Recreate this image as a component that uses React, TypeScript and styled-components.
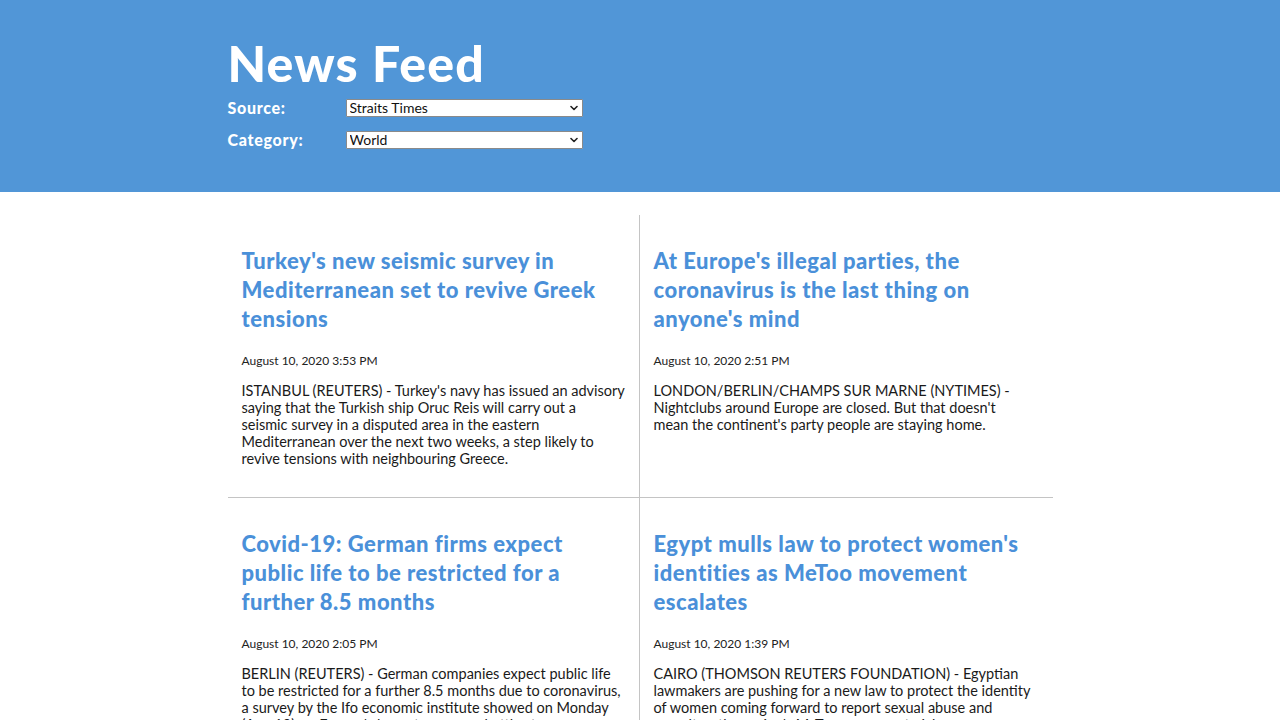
import React from "react";
import styled, { createGlobalStyle } from "styled-components";

const Global = createGlobalStyle`
  html, body { margin: 0; padding: 0; background: #ffffff; }
  body { font-family: Lato, "Noto Sans", sans-serif; color: #1f1f1f; }
`;

const Header = styled.header`
  background: #5196d7;
  height: 192px;
  box-sizing: border-box;
`;

const Container = styled.div`
  width: 825px;
  margin: 0 auto;
`;

const HeaderInner = styled(Container)`
  padding-top: 34px;
`;

const Title = styled.h1`
  margin: 0 0 6px;
  font-size: 50px;
  line-height: 58px;
  font-weight: 900;
  color: #ffffff;
  letter-spacing: 1.2px;
`;

const Filters = styled.div`
  display: grid;
  grid-template-columns: 118px 237px;
  row-gap: 13px;
  align-items: center;
`;

const Label = styled.label`
  font-size: 16px;
  font-weight: 900;
  color: #ffffff;
  letter-spacing: 0.7px;
`;

const SelectWrap = styled.div`
  position: relative;
  width: 237px;
  height: 18px;
`;

const Select = styled.select`
  appearance: none;
  -webkit-appearance: none;
  display: block;
  width: 237px;
  height: 18px;
  box-sizing: border-box;
  border: 1px solid #8a8a8a;
  border-radius: 1px;
  background: #ffffff;
  font-family: Lato, "Noto Sans", sans-serif;
  font-size: 14px;
  line-height: 16px;
  color: #111;
  padding: 0 3px;
  margin: 0;
  outline: none;
`;

const Chevron = styled.svg`
  position: absolute;
  right: 5px;
  top: 6px;
  width: 8px;
  height: 6px;
  pointer-events: none;
`;

const Grid = styled(Container)`
  margin-top: 23px;
  display: grid;
  grid-template-columns: 412px 413px;
`;

const Card = styled.article<{ $left: boolean; $bottom: boolean }>`
  padding: 14px ${(p) => (p.$left ? "14px" : "20px")} 16px 14px;
  box-sizing: border-box;
  border-right: ${(p) => (p.$left ? "1px solid #c4c4c4" : "none")};
  border-bottom: ${(p) => (p.$bottom ? "1px solid #c4c4c4" : "none")};
`;

const Headline = styled.h2`
  margin: 17px 0 20px;
  font-size: 22px;
  line-height: 29px;
  font-weight: 900;
  color: #4a90d9;
  letter-spacing: 0.5px;
`;

const DateLine = styled.div`
  font-size: 12px;
  line-height: 16px;
  color: #222;
`;

const Body = styled.p`
  margin: 13px 0 14px;
  font-size: 14.5px;
  line-height: 17px;
  color: #1a1a1a;
`;

const items = [
  {
    title: "Turkey's new seismic survey in Mediterranean set to revive Greek tensions",
    date: "August 10, 2020 3:53 PM",
    body: "ISTANBUL (REUTERS) - Turkey's navy has issued an advisory saying that the Turkish ship Oruc Reis will carry out a seismic survey in a disputed area in the eastern Mediterranean over the next two weeks, a step likely to revive tensions with neighbouring Greece.",
  },
  {
    title: "At Europe's illegal parties, the coronavirus is the last thing on anyone's mind",
    date: "August 10, 2020 2:51 PM",
    body: "LONDON/BERLIN/CHAMPS SUR MARNE (NYTIMES) - Nightclubs around Europe are closed. But that doesn't mean the continent's party people are staying home.",
  },
  {
    title: "Covid-19: German firms expect public life to be restricted for a further 8.5 months",
    date: "August 10, 2020 2:05 PM",
    body: "BERLIN (REUTERS) - German companies expect public life to be restricted for a further 8.5 months due to coronavirus, a survey by the Ifo economic institute showed on Monday (Aug 10), as Europe's largest economy battles to recover.",
  },
  {
    title: "Egypt mulls law to protect women's identities as MeToo movement escalates",
    date: "August 10, 2020 1:39 PM",
    body: "CAIRO (THOMSON REUTERS FOUNDATION) - Egyptian lawmakers are pushing for a new law to protect the identity of women coming forward to report sexual abuse and assault as the nation's MeToo movement picks up pace.",
  },
];

function Dropdown({ id, value, label }: { id: string; value: string; label: string }) {
  return (
    <SelectWrap>
      <Select id={id} defaultValue={value}>
        <option value={value}>{label}</option>
      </Select>
      <Chevron viewBox="0 0 8 6" aria-hidden="true">
        <path d="M1 1.5 L4 4.5 L7 1.5" fill="none" stroke="#222" strokeWidth="1.6" strokeLinecap="round" strokeLinejoin="round" />
      </Chevron>
    </SelectWrap>
  );
}

export default function App() {
  return (
    <>
      <Global />
      <Header>
        <HeaderInner>
          <Title>News Feed</Title>
          <Filters>
            <Label htmlFor="source">Source:</Label>
            <Dropdown id="source" value="st" label="Straits Times" />
            <Label htmlFor="category">Category:</Label>
            <Dropdown id="category" value="world" label="World" />
          </Filters>
        </HeaderInner>
      </Header>
      <Grid>
        {items.map((it, i) => (
          <Card key={i} $left={i % 2 === 0} $bottom={i < 2}>
            <Headline>{it.title}</Headline>
            <DateLine>{it.date}</DateLine>
            <Body>{it.body}</Body>
          </Card>
        ))}
      </Grid>
    </>
  );
}
